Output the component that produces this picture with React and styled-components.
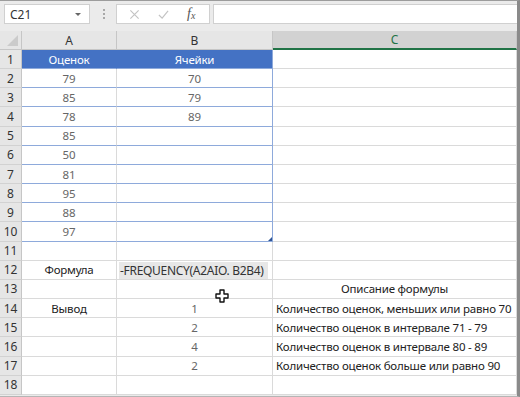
import React from "react";
import styled, { createGlobalStyle } from "styled-components";

const GlobalStyle = createGlobalStyle`
  html, body {
    margin: 0;
    padding: 0;
    background: #ffffff;
  }
  body {
    font-family: "Noto Sans", "Open Sans", sans-serif;
  }
`;

const COLS = "22px 95px 156px 244px";

const ROWS = [
  { a: "Оценок", b: "Ячейки", kind: "head" },
  { a: "79", b: "70", kind: "body" },
  { a: "85", b: "79", kind: "body" },
  { a: "78", b: "89", kind: "body" },
  { a: "85", kind: "body" },
  { a: "50", kind: "body" },
  { a: "81", kind: "body" },
  { a: "95", kind: "body" },
  { a: "88", kind: "body" },
  { a: "97", kind: "body", corner: true },
  {},
  { a: "Формула", formula: "-FREQUENCY(A2AIO. B2B4)" },
  { c: "Описание формулы", cCenter: true },
  { a: "Вывод", b: "1", c: "Количество оценок, меньших или равно 70" },
  { b: "2", c: "Количество оценок в интервале 71 - 79" },
  { b: "4", c: "Количество оценок в интервале 80 - 89" },
  { b: "2", c: "Количество оценок больше или равно 90" },
  {},
];

const App = () => {
  return (
    <>
      <GlobalStyle />
      <Window>
        <Toolbar>
          <NameBox>
            <span>C21</span>
            <Caret />
          </NameBox>
          <Grip>
            <i />
            <i />
            <i />
          </Grip>
          <FxButtons>
            <ToolIcon viewBox="0 0 12 12">
              <path d="M1.5 1.5 L10.5 10.5 M10.5 1.5 L1.5 10.5" />
            </ToolIcon>
            <ToolIcon viewBox="0 0 12 12">
              <path d="M1 6.5 L4.5 10 L11 2" />
            </ToolIcon>
            <FxLabel>
              f<sub>x</sub>
            </FxLabel>
          </FxButtons>
          <FormulaInput />
        </Toolbar>

        <Sheet>
          <Corner />
          <ColHead>A</ColHead>
          <ColHead>B</ColHead>
          <ColHead $selected>C</ColHead>

          {ROWS.map((row, i) => {
            const kind = row.kind;
            return (
              <React.Fragment key={i}>
                <RowHead>{i + 1}</RowHead>
                <Cell $kind={kind} $tone={row.kind === "body" ? "muted" : "dark"}>
                  {row.a}
                </Cell>
                <Cell
                  $kind={kind}
                  $edge={!!kind}
                  $corner={row.corner}
                  $tone={kind === "head" ? "dark" : "muted"}
                >
                  {row.formula ? <Formula>{row.formula}</Formula> : row.b}
                </Cell>
                <Cell $align={row.cCenter ? "center" : "left"} $tone="dark">
                  {row.c}
                </Cell>
              </React.Fragment>
            );
          })}
          <Pointer viewBox="0 0 14 14">
            <path d="M5 1 H9 V5 H13 V9 H9 V13 H5 V9 H1 V5 H5 Z" />
          </Pointer>
        </Sheet>
      </Window>
    </>
  );
};

const Window = styled.div`
  position: relative;
  width: 517px;
  height: 395px;
  border-top: 1px solid #9c9c9c;
  border-right: 3px solid #8a8a8a;
  border-bottom: 1px solid #b5b5b5;
  background: #ebebeb;
  overflow: hidden;
`;

const Toolbar = styled.div`
  display: flex;
  align-items: flex-start;
  height: 30px;
  padding: 3px 0 0 4px;
  box-sizing: border-box;
`;

const NameBox = styled.div`
  display: flex;
  align-items: center;
  justify-content: space-between;
  box-sizing: border-box;
  width: 86px;
  height: 20px;
  padding: 0 8px 0 5px;
  background: #ffffff;
  border: 1px solid #d0d0d0;
  font-size: 12px;
  color: #333333;
`;

const Caret = styled.span`
  width: 0;
  height: 0;
  border-left: 3px solid transparent;
  border-right: 3px solid transparent;
  border-top: 3px solid #666666;
`;

const Grip = styled.div`
  display: flex;
  flex-direction: column;
  gap: 2px;
  margin: 5px 11px 0 13px;

  i {
    width: 2px;
    height: 2px;
    background: #a8a8a8;
  }
`;

const FxButtons = styled.div`
  display: flex;
  align-items: center;
  gap: 18px;
  box-sizing: border-box;
  width: 94px;
  height: 20px;
  padding-left: 12px;
  background: #ffffff;
  border: 1px solid #d0d0d0;
`;

const ToolIcon = styled.svg`
  width: 11px;
  height: 11px;
  fill: none;
  stroke: #c4c4c4;
  stroke-width: 1.3;
`;

const FxLabel = styled.span`
  font-family: "Liberation Serif", serif;
  font-style: italic;
  font-size: 14px;
  color: #555555;
  line-height: 1;

  sub {
    font-size: 10px;
    vertical-align: -1px;
  }
`;

const FormulaInput = styled.div`
  flex: 1;
  height: 20px;
  margin-left: 3px;
  box-sizing: border-box;
  background: #ffffff;
  border: 1px solid #d0d0d0;
  border-right: none;
`;

const Sheet = styled.div`
  position: relative;
  display: grid;
  grid-template-columns: ${COLS};
  grid-template-rows: 19px;
  grid-auto-rows: 19.17px;
  background: #ffffff;
  font-size: 11.5px;
`;

const Corner = styled.div`
  position: relative;
  background: #e6e6e6;
  border-right: 1px solid #c6c6c6;
  border-bottom: 1px solid #c6c6c6;

  &::after {
    content: "";
    position: absolute;
    right: 3px;
    bottom: 3px;
    border-left: 11px solid transparent;
    border-bottom: 11px solid #cbcbcb;
  }
`;

const ColHead = styled.div`
  display: flex;
  align-items: center;
  justify-content: center;
  box-sizing: border-box;
  background: ${(p) => (p.$selected ? "#d2d2d2" : "#e6e6e6")};
  color: ${(p) => (p.$selected ? "#217346" : "#333333")};
  border-right: 1px solid #c6c6c6;
  border-bottom: ${(p) => (p.$selected ? "2px solid #217346" : "1px solid #c6c6c6")};
  font-size: 12px;
`;

const RowHead = styled.div`
  display: flex;
  align-items: center;
  justify-content: center;
  background: #e6e6e6;
  color: #333333;
  border-right: 1px solid #c6c6c6;
  border-bottom: 1px solid #d2d2d2;
  font-size: 12px;
`;

const TONES = {
  dark: "#222222",
  muted: "#666666",
};

const Cell = styled.div`
  position: relative;
  display: flex;
  align-items: center;
  justify-content: ${(p) => (p.$align === "left" ? "flex-start" : "center")};
  padding-left: ${(p) => (p.$align === "left" ? "3px" : "0")};
  min-width: 0;
  white-space: nowrap;
  letter-spacing: -0.2px;
  color: ${(p) => (p.$kind === "head" ? "#ffffff" : TONES[p.$tone])};
  background: ${(p) => (p.$kind === "head" ? "#4472c4" : "#ffffff")};
  border-bottom: 1px solid ${(p) => (p.$kind ? "#8eaadb" : "#dadada")};
  border-right: 1px solid
    ${(p) => (p.$edge ? "#8eaadb" : p.$kind === "head" ? "#4472c4" : "#dadada")};

  &::after {
    content: "";
    display: ${(p) => (p.$corner ? "block" : "none")};
    position: absolute;
    right: 0;
    bottom: 0;
    border-left: 4px solid transparent;
    border-bottom: 4px solid #2f5597;
  }
`;

const Formula = styled.span`
  align-self: stretch;
  display: flex;
  align-items: center;
  margin: 1px 4px 0 2px;
  padding-left: 1px;
  flex: 1;
  background: #e7e7e7;
  color: #333333;
  font-size: 12px;
  letter-spacing: -0.3px;
`;

const Pointer = styled.svg`
  position: absolute;
  left: 215px;
  top: 258px;
  width: 14px;
  height: 14px;
  fill: #ffffff;
  stroke: #111111;
  stroke-width: 1.4;
  stroke-linejoin: round;
`;

export default App;
